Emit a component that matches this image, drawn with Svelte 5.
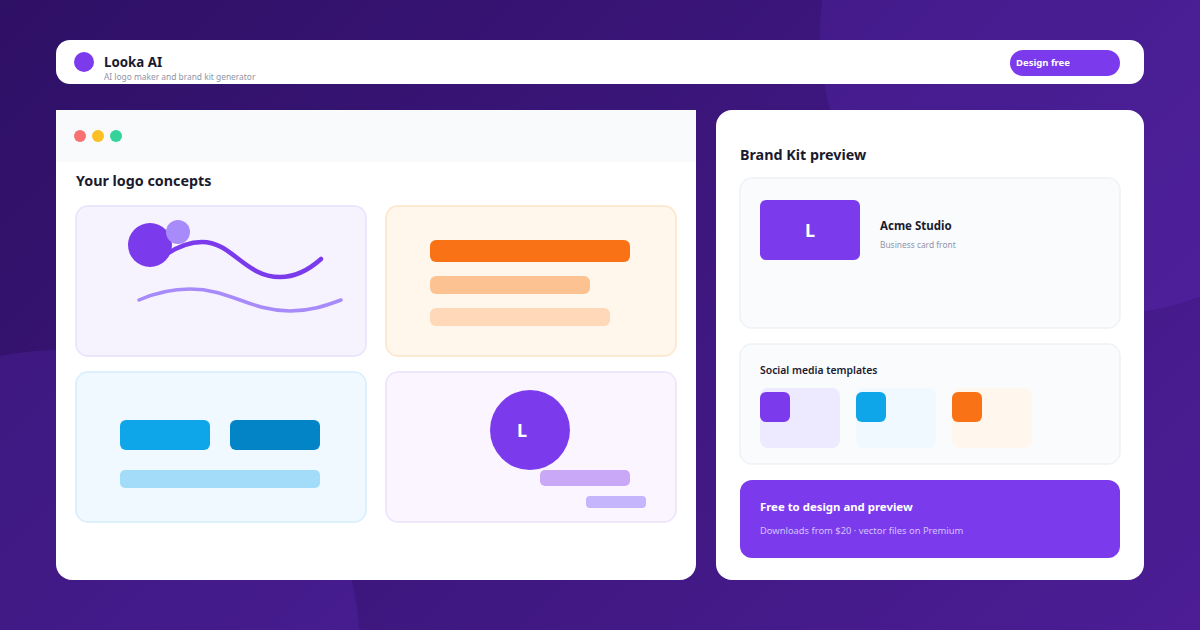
<script>
  const thumbs = [
    { bg: '#ede9fe', fg: '#7c3aed' },
    { bg: '#f0f9ff', fg: '#0ea5e9' },
    { bg: '#fff7ed', fg: '#f97316' }
  ];
</script>

<div class="page">
  <div class="blob blob-a"></div>
  <div class="blob blob-b"></div>

  <header class="topbar">
    <div class="brand">
      <span class="brand-dot"></span>
      <div class="brand-text">
        <div class="brand-name">Looka AI</div>
        <div class="brand-sub">AI logo maker and brand kit generator</div>
      </div>
    </div>
    <div class="cta-btn">Design free</div>
  </header>

  <main class="columns">
    <section class="window">
      <div class="chrome">
        <span class="dot red"></span>
        <span class="dot amber"></span>
        <span class="dot green"></span>
      </div>
      <div class="window-body">
        <h2 class="concepts-title">Your logo concepts</h2>
        <div class="tiles">
          <div class="tile tile-violet">
            <svg class="art" viewBox="76 206 290 150" width="290" height="150" aria-hidden="true">
              <circle cx="150" cy="245" r="22" fill="#7c3aed" />
              <path d="M165 255 C180 245 192 242 202 242 C232 242 245 277 280 277 C298 277 311 268 321 259" fill="none" stroke="#7c3aed" stroke-width="4.5" stroke-linecap="round" />
              <circle cx="178" cy="232" r="12" fill="#a78bfa" />
              <path d="M139 300 C155 293 172 289 190 289 C230 289 250 311 290 311 C310 311 325 306 341 300" fill="none" stroke="#a78bfa" stroke-width="3.5" stroke-linecap="round" />
            </svg>
          </div>

          <div class="tile tile-orange">
            <div class="bar b1"></div>
            <div class="bar b2"></div>
            <div class="bar b3"></div>
          </div>

          <div class="tile tile-blue">
            <div class="blue-row">
              <div class="blue-box light"></div>
              <div class="blue-box deep"></div>
            </div>
            <div class="blue-wide"></div>
          </div>

          <div class="tile tile-lilac">
            <svg class="art" viewBox="386 372 290 150" width="290" height="150">
              <circle cx="530" cy="430" r="40" fill="#7c3aed" />
              <text x="522" y="437" text-anchor="middle" class="art-l">L</text>
              <rect x="540" y="470" width="90" height="16" rx="5" fill="#c9a9f7" />
              <rect x="586" y="496" width="60" height="12" rx="4" fill="#c4b5fd" />
            </svg>
          </div>
        </div>
      </div>
    </section>

    <aside class="panel">
      <h2 class="panel-title">Brand Kit preview</h2>

      <div class="soft-card card-biz">
        <div class="biz-logo">L</div>
        <div class="biz-text">
          <div class="biz-name">Acme Studio</div>
          <div class="biz-sub">Business card front</div>
        </div>
      </div>

      <div class="soft-card card-social">
        <div class="social-title">Social media templates</div>
        <div class="thumbs">
          {#each thumbs as t}
            <div class="thumb" style="background:{t.bg}">
              <div class="thumb-in" style="background:{t.fg}"></div>
            </div>
          {/each}
        </div>
      </div>

      <div class="promo">
        <div class="promo-title">Free to design and preview</div>
        <div class="promo-sub">Downloads from $20 · vector files on Premium</div>
      </div>
    </aside>
  </main>
</div>

<style>
  :global(body) {
    margin: 0;
  }
  .page {
    position: relative;
    width: 1200px;
    height: 630px;
    overflow: hidden;
    box-sizing: border-box;
    padding: 40px 56px 0;
    background: linear-gradient(135deg, #2e1065 0%, #4c1d95 100%);
    font-family: "Noto Sans", sans-serif;
    color: #1a1a2e;
  }
  .blob {
    position: absolute;
    border-radius: 50%;
    background: rgba(124, 58, 237, 0.15);
  }
  .blob-a {
    width: 560px;
    height: 560px;
    left: 820px;
    top: -245px;
  }
  .blob-b {
    width: 600px;
    height: 600px;
    left: -240px;
    top: 350px;
  }
  .topbar {
    position: relative;
    height: 44px;
    background: #fff;
    border-radius: 14px;
    display: flex;
    align-items: flex-start;
    justify-content: space-between;
    padding: 10px 24px 0 18px;
    box-sizing: border-box;
  }
  .brand {
    display: flex;
    gap: 10px;
    padding-top: 2px;
  }
  .brand-dot {
    width: 20px;
    height: 20px;
    border-radius: 50%;
    background: #7c3aed;
    flex: none;
  }
  .brand-name {
    font-size: 13.3px;
    font-weight: 700;
    line-height: 20px;
  }
  .brand-sub {
    font-size: 8.4px;
    line-height: 12px;
    margin-top: -1px;
    color: #8f94a8;
  }
  .cta-btn {
    width: 110px;
    height: 26px;
    box-sizing: border-box;
    padding-left: 6px;
    border-radius: 13px;
    background: #7c3aed;
    color: #fff;
    font-size: 9.5px;
    font-weight: 700;
    line-height: 26px;
  }
  .columns {
    position: relative;
    display: flex;
    gap: 20px;
    margin-top: 26px;
    height: 470px;
  }
  .window {
    width: 640px;
    background: #fff;
    border-radius: 0 0 16px 16px;
    overflow: hidden;
  }
  .chrome {
    height: 52px;
    background: #f8fafc;
    display: flex;
    align-items: center;
    gap: 6px;
    padding-left: 18px;
  }
  .dot {
    width: 12px;
    height: 12px;
    border-radius: 50%;
  }
  .red { background: #f87171; }
  .amber { background: #fbbf24; }
  .green { background: #34d399; }
  .window-body {
    padding: 8px 20px 0;
  }
  .concepts-title {
    margin: 0 0 14px;
    font-size: 14.3px;
    line-height: 22px;
    font-weight: 700;
  }
  .tiles {
    display: grid;
    grid-template-columns: 290px 290px;
    grid-template-rows: 150px 150px;
    gap: 16px 20px;
  }
  .tile {
    box-sizing: border-box;
    border-radius: 12px;
    box-shadow: 0 0 0 0.75px var(--edge), inset 0 0 0 0.75px var(--edge);
  }
  .art {
    display: block;
  }
  .art-l {
    font-size: 18px;
    font-weight: 700;
    fill: #fff;
    font-family: "Noto Sans", sans-serif;
  }
  .tile-violet { background: #f6f3ff; --edge: #e6e0fd; }
  .tile-orange {
    background: #fff7ec;
    --edge: #fce3c5;
    padding: 34px 0 0 44px;
    display: flex;
    flex-direction: column;
    gap: 14px;
  }
  .bar { border-radius: 6px; }
  .b1 { width: 200px; height: 22px; background: #f97316; }
  .b2 { width: 160px; height: 18px; background: #fdc291; }
  .b3 { width: 180px; height: 18px; background: #fed8b8; }
  .tile-blue {
    background: #f0f9ff;
    --edge: #d4ecfc;
    padding: 48px 0 0 44px;
  }
  .blue-row {
    display: flex;
    gap: 20px;
  }
  .blue-box {
    width: 90px;
    height: 30px;
    border-radius: 6px;
  }
  .light { background: #0ea5e9; }
  .deep { background: #0284c7; }
  .blue-wide {
    width: 200px;
    height: 18px;
    margin-top: 20px;
    border-radius: 5px;
    background: #a3dcf9;
  }
  .tile-lilac { background: #fbf5ff; --edge: #e9e1fd; }
  .panel {
    width: 428px;
    box-sizing: border-box;
    background: #fff;
    border-radius: 16px;
    padding: 34px 24px 22px;
    display: flex;
    flex-direction: column;
    gap: 16px;
  }
  .panel-title {
    margin: 0 0 -4px;
    font-size: 14.3px;
    line-height: 22px;
    font-weight: 700;
  }
  .soft-card {
    box-sizing: border-box;
    background: #fafbfd;
    border-radius: 12px;
    box-shadow: 0 0 0 0.75px #eef1f5, inset 0 0 0 0.75px #eef1f5;
    padding: 22px 20px;
  }
  .card-biz {
    height: 150px;
    display: flex;
    align-items: flex-start;
    gap: 20px;
  }
  .biz-logo {
    width: 100px;
    height: 60px;
    border-radius: 6px;
    background: #7c3aed;
    color: #fff;
    font-size: 18px;
    font-weight: 700;
    text-align: center;
    line-height: 60px;
  }
  .biz-text {
    padding-top: 18px;
  }
  .biz-name {
    font-size: 11.5px;
    font-weight: 700;
    line-height: 16px;
  }
  .biz-sub {
    margin-top: 5px;
    font-size: 8.4px;
    line-height: 12px;
    color: #8f94a8;
  }
  .card-social {
    height: 120px;
    padding-top: 18px;
  }
  .social-title {
    font-size: 10.4px;
    font-weight: 600;
    line-height: 16px;
  }
  .thumbs {
    display: flex;
    gap: 16px;
    margin-top: 10px;
  }
  .thumb {
    width: 80px;
    height: 60px;
    border-radius: 8px;
    padding-top: 4px;
    box-sizing: border-box;
  }
  .thumb-in {
    width: 30px;
    height: 30px;
    border-radius: 6px;
  }
  .promo {
    height: 78px;
    box-sizing: border-box;
    background: #7c3aed;
    border-radius: 12px;
    padding: 19px 20px 0;
    color: #fff;
  }
  .promo-title {
    font-size: 11.4px;
    font-weight: 700;
    line-height: 16px;
  }
  .promo-sub {
    margin-top: 9px;
    font-size: 9.4px;
    line-height: 14px;
    color: #d3c3fb;
  }
</style>
